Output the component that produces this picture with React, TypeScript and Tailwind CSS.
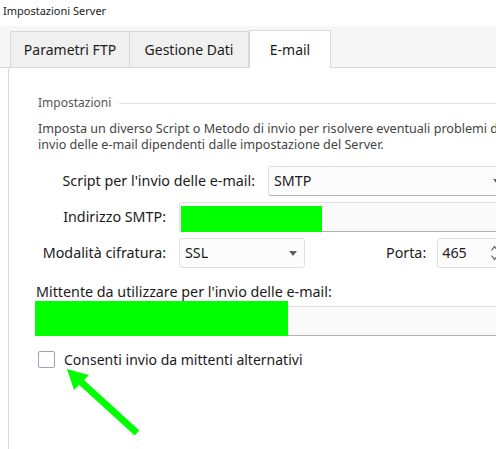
import React from "react";

const font = { fontFamily: '"Segoe UI", "Noto Sans", sans-serif' };

function Chevron() {
  return (
    <svg width="8" height="5" viewBox="0 0 8 5" className="shrink-0">
      <path d="M0 0h8L4 5z" fill="#606060" />
    </svg>
  );
}

function Spinner() {
  return (
    <svg width="7" height="16" viewBox="0 0 7 16" className="shrink-0">
      <path d="M0.5 5.5L3.5 1.5L6.5 5.5" fill="none" stroke="#606060" strokeWidth="1.2" />
      <path d="M0.5 10.5L3.5 14.5L6.5 10.5" fill="none" stroke="#606060" strokeWidth="1.2" />
    </svg>
  );
}

export default function App() {
  return (
    <div
      className="w-[496px] h-[449px] bg-white overflow-hidden relative flex flex-col text-[#1b1b1b]"
      style={font}
    >
      {/* Window title */}
      <div className="h-[26px] pl-[3px] text-[11px] leading-[22px] whitespace-nowrap">Impostazioni Server</div>

      {/* Tab strip */}
      <div className="h-[42px] bg-[#f7f7f7] border-b border-[#d9d9d9] flex items-end pl-[10px] shrink-0">
        <div className="h-[36px] w-[120px] shrink-0 bg-[#f0f0f0] border border-b-0 border-[#d9d9d9] flex items-center justify-center text-[14px]">
          Parametri FTP
        </div>
        <div className="h-[36px] w-[119px] shrink-0 bg-[#f0f0f0] border border-l-0 border-b-0 border-[#d9d9d9] flex items-center justify-center text-[14px]">
          Gestione Dati
        </div>
        <div className="h-[38px] w-[82px] shrink-0 bg-white border border-b-0 border-[#d9d9d9] flex items-center justify-center text-[14px] -mb-px relative">
          E-mail
        </div>
      </div>

      {/* Page */}
      <div className="flex-1 ml-[8px] border-l border-[#d9d9d9] bg-white pl-[29px] pt-[27px] flex flex-col">
        {/* Group header */}
        <div className="flex items-center h-[16px]">
          <span className="text-[12px] text-[#555] whitespace-nowrap">Impostazioni</span>
          <div className="flex-1 h-px bg-[#e3e3e3] ml-[8px]" />
        </div>

        {/* Description */}
        <div className="mt-[10px] text-[12.6px] leading-[16px] text-[#444] whitespace-nowrap">
          <div>Imposta un diverso Script o Metodo di invio per risolvere eventuali problemi di</div>
          <div>invio delle e-mail dipendenti dalle impostazione del Server.</div>
        </div>

        {/* Script row */}
        <div className="mt-[13px] flex items-center h-[30px]">
          <div className="w-[217px] shrink-0 text-right text-[14.3px] whitespace-nowrap">Script per l'invio delle e-mail:</div>
          <div className="ml-[13px] w-[240px] h-[30px] shrink-0 rounded-[3px] border border-[#e0e0e0] border-b-[#b5b5b5] bg-[#fcfcfc] flex items-center justify-between pl-[5px] pr-[6px] text-[14.3px]">
            <span>SMTP</span>
            <Chevron />
          </div>
        </div>

        {/* SMTP address row */}
        <div className="mt-[6px] flex items-center h-[30px]">
          <div className="w-[128px] shrink-0 text-right text-[14.3px] whitespace-nowrap">Indirizzo SMTP:</div>
          <div className="ml-[13px] w-[330px] h-[30px] shrink-0 rounded-[3px] border border-[#e0e0e0] border-b-[#b0b0b0] bg-[#fafafa] relative">
            <div className="absolute left-[1px] top-[3px] w-[141px] h-[26px] bg-[#00ff00]" />
          </div>
        </div>

        {/* Encryption / port row */}
        <div className="mt-[6px] flex items-center h-[30px]">
          <div className="w-[128px] shrink-0 text-right text-[14.3px] whitespace-nowrap">Modalità cifratura:</div>
          <div className="ml-[13px] w-[126px] h-[30px] shrink-0 rounded-[3px] border border-[#e0e0e0] bg-[#fcfcfc] flex items-center justify-between pl-[5px] pr-[7px] text-[14.3px]">
            <span>SSL</span>
            <Chevron />
          </div>
          <div className="ml-[81px] shrink-0 text-[14.3px] whitespace-nowrap">Porta:</div>
          <div className="ml-[11px] w-[66px] h-[30px] shrink-0 rounded-[3px] border border-[#e0e0e0] bg-[#fcfcfc] flex items-center justify-between pl-[4px] pr-[4px] text-[14.3px]">
            <span>465</span>
            <Spinner />
          </div>
        </div>

        {/* Sender */}
        <div className="mt-[14px] -ml-[2px] text-[14.3px] leading-[20px] whitespace-nowrap">
          Mittente da utilizzare per l'invio delle e-mail:
        </div>
        <div className="mt-[4px] -ml-[3px] w-[480px] h-[30px] shrink-0 rounded-[3px] border border-[#e0e0e0] border-b-[#b0b0b0] bg-[#fafafa] relative">
          <div className="absolute -left-px -top-[6px] w-[253px] h-[35px] bg-[#00ff00]" />
        </div>

        {/* Checkbox */}
        <div className="mt-[14px] flex items-center h-[18px]">
          <div className="w-[17px] h-[17px] rounded-[2px] border border-[#98a6c4] bg-white shrink-0" />
          <span className="ml-[9px] text-[14px] whitespace-nowrap">Consenti invio da mittenti alternativi</span>
        </div>
      </div>

      {/* Annotation arrow */}
      <svg className="absolute left-0 top-0 pointer-events-none" width="496" height="449">
        <line x1="137" y1="433" x2="80" y2="381" stroke="#00ff00" strokeWidth="7" />
        <polygon points="67,369 89,375 74,390" fill="#00ff00" />
      </svg>
    </div>
  );
}
